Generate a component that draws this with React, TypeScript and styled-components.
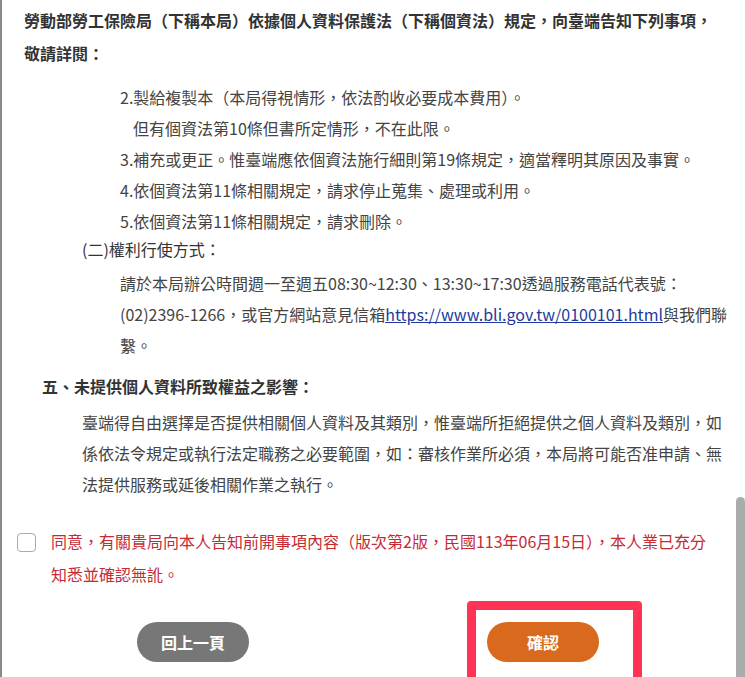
import styled, { createGlobalStyle } from "styled-components";

const GlobalStyle = createGlobalStyle`
  html, body {
    margin: 0;
    padding: 0;
    background: #fff;
  }
  body {
    font-family: "Noto Sans CJK TC", "Noto Sans", sans-serif;
  }
`;

const items = [
  { text: "2.製給複製本（本局得視情形，依法酌收必要成本費用）。", indent: 120 },
  { text: "但有個資法第10條但書所定情形，不在此限。", indent: 133 },
  { text: "3.補充或更正。惟臺端應依個資法施行細則第19條規定，適當釋明其原因及事實。", indent: 120 },
  { text: "4.依個資法第11條相關規定，請求停止蒐集、處理或利用。", indent: 120 },
  { text: "5.依個資法第11條相關規定，請求刪除。", indent: 120 },
];

const App = () => {
  return (
    <>
      <GlobalStyle />
      <Modal>
        <Intro>
          勞動部勞工保險局（下稱本局）依據個人資料保護法（下稱個資法）規定，向臺端告知下列事項，
          <br />
          敬請詳閱：
        </Intro>

        <Block $mt={12}>
          {items.map((item) => (
            <Line key={item.text} $indent={item.indent}>
              {item.text}
            </Line>
          ))}
        </Block>

        <SubTitle $indent={82}>(二)權利行使方式：</SubTitle>
        <Block $mt={7}>
          <Line $indent={120}>
            請於本局辦公時間週一至週五08:30~12:30、13:30~17:30透過服務電話代表號：
            <br />
            (02)2396-1266，或官方網站意見信箱
            <Link href="#">https://www.bli.gov.tw/0100101.html</Link>與我們聯
            <br />
            繫。
          </Line>
        </Block>

        <Heading>五、未提供個人資料所致權益之影響：</Heading>
        <Block $mt={5}>
          <Line $indent={82}>
            臺端得自由選擇是否提供相關個人資料及其類別，惟臺端所拒絕提供之個人資料及類別，如
            <br />
            係依法令規定或執行法定職務之必要範圍，如：審核作業所必須，本局將可能否准申請、無
            <br />
            法提供服務或延後相關作業之執行。
          </Line>
        </Block>

        <Agree>
          <CheckBox type="checkbox" />
          <AgreeText>
            同意，有關貴局向本人告知前開事項內容（版次第2版，民國113年06月15日），本人業已充分
            <br />
            知悉並確認無訛。
          </AgreeText>
        </Agree>

        <ButtonRow>
          <Button $color="#777777">回上一頁</Button>
          <Button $color="#d9691c">確認</Button>
          <Highlight />
        </ButtonRow>

        <ScrollThumb />
      </Modal>
    </>
  );
};

const Modal = styled.div`
  position: relative;
  height: 677px;
  overflow: hidden;
  border-left: 2px solid #8a8a8a;
  box-sizing: border-box;
  background: #fff;
  color: #444;
  font-size: 16px;
`;

const Intro = styled.p`
  margin: 0;
  padding: 4px 0 0 22px;
  font-weight: 700;
  line-height: 33px;
  color: #333;
`;

const Block = styled.div<{ $mt: number }>`
  margin-top: ${(p) => p.$mt}px;
`;

const Line = styled.p<{ $indent: number }>`
  margin: 0;
  padding-left: ${(p) => p.$indent - 2}px;
  line-height: 31px;
  white-space: nowrap;
`;

const SubTitle = styled.p<{ $indent: number }>`
  margin: 0;
  padding-left: ${(p) => p.$indent - 2}px;
  line-height: 24px;
  color: #333;
`;

const Heading = styled.p`
  margin: 10px 0 0;
  padding-left: 40px;
  line-height: 31px;
  font-weight: 700;
  color: #333;
`;

const Link = styled.a`
  color: #1e3a9e;
  text-decoration: underline;
`;

const Agree = styled.label`
  display: flex;
  align-items: flex-start;
  gap: 15px;
  margin-top: 25px;
  padding-left: 15px;
`;

const CheckBox = styled.input`
  appearance: none;
  flex: none;
  width: 19px;
  height: 19px;
  margin: 8px 0 0;
  border: 1.5px solid #aaa;
  border-radius: 4px;
  background: #fff;
  box-sizing: border-box;
`;

const AgreeText = styled.span`
  color: #c62a33;
  line-height: 33px;
  white-space: nowrap;
`;

const ButtonRow = styled.div`
  position: relative;
  display: flex;
  gap: 238px;
  margin-top: 31px;
  padding-left: 135px;
`;

const Button = styled.button<{ $color: string }>`
  width: 112px;
  height: 40px;
  border: none;
  border-radius: 20px;
  background: ${(p) => p.$color};
  color: #fff;
  font-family: inherit;
  font-size: 16px;
  font-weight: 700;
  cursor: pointer;
`;

const Highlight = styled.div`
  position: absolute;
  left: 465px;
  top: -21px;
  width: 175px;
  height: 100px;
  border: 9px solid #ff3355;
  border-radius: 4px;
  box-sizing: border-box;
  pointer-events: none;
`;

const ScrollThumb = styled.div`
  position: absolute;
  right: 0;
  top: 497px;
  width: 9px;
  height: 200px;
  border-radius: 5px;
  background: #ababab;
`;

export default App;
